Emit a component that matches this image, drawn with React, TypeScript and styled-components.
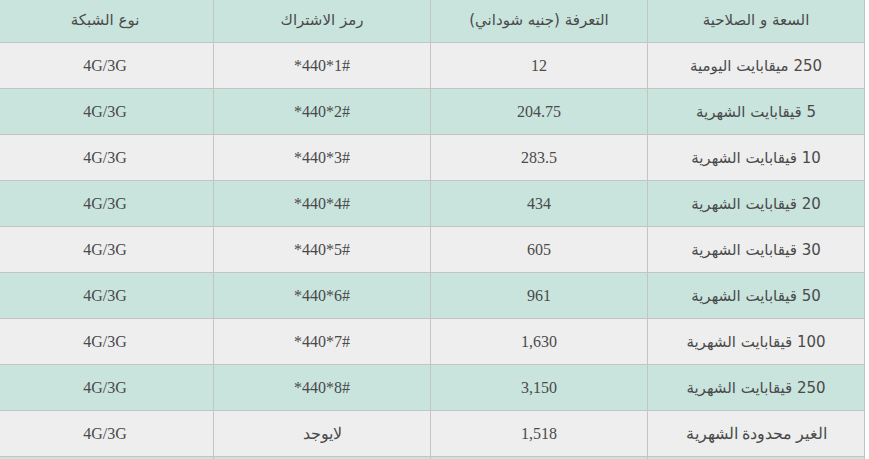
import React from "react";
import styled, { createGlobalStyle } from "styled-components";

const Global = createGlobalStyle`
  html, body { margin: 0; padding: 0; background: #ffffff; overflow: hidden; }
`;

const Wrap = styled.div`
  margin: -4px 0 0 -4px;
  width: 869px;
`;

const Table = styled.table`
  width: 869px;
  border-collapse: collapse;
  table-layout: fixed;
  direction: rtl;
  color: #4a4a4a;
`;

const Row = styled.tr<{ $green: boolean }>`
  height: 46px;
  background: ${(p) => (p.$green ? "#c9e4dd" : "#eeeeee")};
`;

const Head = styled.th`
  border: 1px solid #c4c4c4;
  font-family: "DejaVu Sans", Tahoma, sans-serif;
  font-weight: normal;
  font-size: 15px;
  text-align: center;
  vertical-align: middle;
  padding: 0 8px;
`;

const Cell = styled.td<{ $sans?: boolean }>`
  border: 1px solid #c4c4c4;
  font-family: ${(p) =>
    p.$sans ? `"DejaVu Sans", Tahoma, sans-serif` : `"Liberation Serif", "Times New Roman", serif`};
  font-size: ${(p) => (p.$sans ? "15px" : "16px")};
  text-align: center;
  vertical-align: middle;
  padding: 0 8px;
`;

const rows: [string, string, string, string, boolean][] = [
  ["250 ميقابايت اليومية", "12", "*440*1#", "4G/3G", true],
  ["5 قيقابايت الشهرية", "204.75", "*440*2#", "4G/3G", true],
  ["10 قيقابايت الشهرية", "283.5", "*440*3#", "4G/3G", true],
  ["20 قيقابايت الشهرية", "434", "*440*4#", "4G/3G", true],
  ["30 قيقابايت الشهرية", "605", "*440*5#", "4G/3G", true],
  ["50 قيقابايت الشهرية", "961", "*440*6#", "4G/3G", true],
  ["100 قيقابايت الشهرية", "1,630", "*440*7#", "4G/3G", true],
  ["250 قيقابايت الشهرية", "3,150", "*440*8#", "4G/3G", true],
  ["الغير محدودة الشهرية", "1,518", "لايوجد", "4G/3G", false],
];

export default function App() {
  return (
    <Wrap>
      <Global />
      <Table>
        <thead>
          <Row $green>
            <Head>السعة و الصلاحية</Head>
            <Head>التعرفة (جنيه شوداني)</Head>
            <Head>رمز الاشتراك</Head>
            <Head>نوع الشبكة</Head>
          </Row>
        </thead>
        <tbody>
          {rows.map((r, i) => (
            <Row key={i} $green={i % 2 === 1}>
              <Cell $sans={r[4]}>{r[0]}</Cell>
              <Cell>{r[1]}</Cell>
              <Cell>
                <bdi dir="ltr">{r[2]}</bdi>
              </Cell>
              <Cell>{r[3]}</Cell>
            </Row>
          ))}
          <Row $green>
            <Cell $sans></Cell>
            <Cell></Cell>
            <Cell></Cell>
            <Cell></Cell>
          </Row>
        </tbody>
      </Table>
    </Wrap>
  );
}
